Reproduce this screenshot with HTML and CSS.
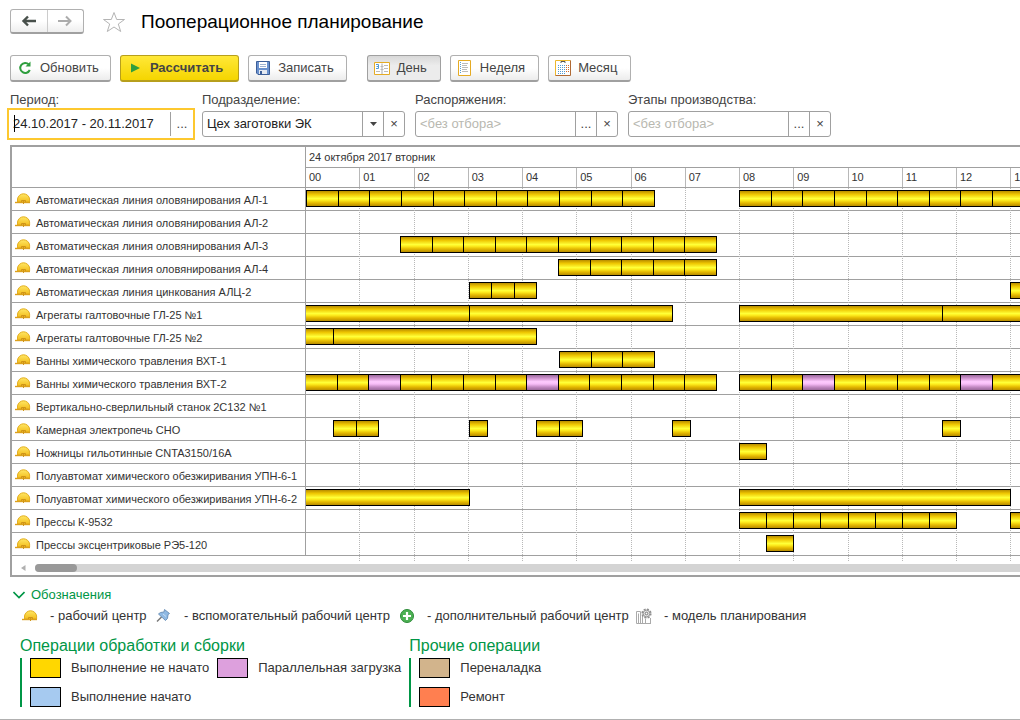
FILE: index.html
```html
<!DOCTYPE html>
<html lang="ru">
<head>
<meta charset="utf-8">
<title>Пооперационное планирование</title>
<link rel="stylesheet" href="styles.css">
</head>
<body>
<svg class="defs" aria-hidden="true">
  <defs>
    <linearGradient id="gold" x1="0" y1="0" x2="0" y2="1"><stop offset="0" stop-color="#ffe765"/><stop offset="1" stop-color="#f3bd1c"/></linearGradient>
    <symbol id="helmet" viewBox="0 0 16 12">
      <path d="M2.500 9V6C3 3 5.500 .8 8.500 .8S14.200 3 14.600 6V9Z" fill="url(#gold)" stroke="#e3ae22"/>
      <path d="M0 9.500H15" stroke="#dca01c" stroke-width="1.400"/>
      <path d="M6.500 9V7.500H10.500V9M8.500 7.500V11" fill="none" stroke="#cf9418"/>
    </symbol>
  </defs>
</svg>

<header class="top">
  <div class="history">
    <button type="button" aria-label="Назад"><svg width="16" height="12" viewBox="0 0 16 12"><path d="M15 6H3M7 1.500L2.500 6L7 10.500" fill="none" stroke="#48504b" stroke-width="2.400"/></svg></button>
    <button type="button" aria-label="Вперед"><svg width="16" height="12" viewBox="0 0 16 12"><path d="M1 6H13M9 1.500L13.500 6L9 10.500" fill="none" stroke="#acacac" stroke-width="2"/></svg></button>
  </div>
  <button type="button" class="star" aria-label="В избранное"><svg width="24" height="22" viewBox="0 0 24 22"><path d="M12 1.500L14.700 8.500H22.500L16.300 13L18.700 20.500L12 16L5.300 20.500L7.700 13L1.500 8.500H9.300Z" fill="#fff" stroke="#b4b4b4"/></svg></button>
  <h1>Пооперационное планирование</h1>
</header>

<div class="toolbar">
  <button type="button" class="btn refresh"><svg width="16" height="16" viewBox="0 0 16 16"><path d="M11.800 4.400A5 5 0 1 0 12.800 10" fill="none" stroke="#2f9e3e" stroke-width="2"/><path d="M8.500 6.500H13.500V1.500Z" fill="#2f9e3e"/></svg>Обновить</button>
  <button type="button" class="btn primary"><svg width="16" height="16" viewBox="0 0 16 16"><path d="M4 3.500L13 8L4 12.500Z" fill="#2f9e3e"/></svg>Рассчитать</button>
  <button type="button" class="btn save"><svg width="16" height="16" viewBox="0 0 16 16"><path d="M1.500 1.500H14.500V14.500H3L1.500 13Z" fill="#6a91ce" stroke="#3c5e98"/><path d="M4 2H12V8H4Z" fill="#fff"/><path d="M5 4.500H11M5 6.500H11" stroke="#9fb3d2"/><path d="M4 10H12V14H4Z" fill="#e4e9f1"/><path d="M5 11H7V14H5Z" fill="#3c5e98"/></svg>Записать</button>
  <div class="scale">
    <button type="button" class="btn pressed" aria-pressed="true"><svg width="16" height="16" viewBox="0 0 16 16"><path d="M.5 2.500H15.500V14.500H.5Z" fill="#fff" stroke="#e5ab24"/><path d="M8 3.500V14" stroke="#aaa"/><path d="M2 4.500H4.500V8.500H2M2.500 6.500H4.500" stroke="#529bd4" fill="none"/><path d="M10 5.500H14M10 8.500H14M10 11.500H14M2 11.500H6M6.500 6.500H9.500M6.500 9.500H9.500" stroke="#bbb"/></svg>День</button>
    <button type="button" class="btn"><svg width="16" height="16" viewBox="0 0 16 16"><path d="M1.500 .5H13.500V15.500H1.500Z" fill="#fff" stroke="#e5ab24"/><path d="M3.500 2V14" stroke="#529bd4" stroke-dasharray="1 1"/><path d="M5 3.500H11M5 5.500H10M5 7.500H11M5 9.500H10M5 11.500H11" stroke="#bbb"/></svg>Неделя</button>
    <button type="button" class="btn"><svg width="16" height="16" viewBox="0 0 16 16"><path d="M.5 .5H15.500V15.500H.5Z" fill="#fff"/><path d="M.5 15.500V.5H15.500" fill="none" stroke="#edb72b"/><path d="M.5 15.500H15.500V.5" fill="none" stroke="#b06a34"/><path d="M6 3V1.500H10V3" fill="none" stroke="#555"/><path d="M3 5.500H11M3 7.500H11M3 9.500H11M3 11.500H11M3 13.500H11" stroke="#529bd4" stroke-dasharray="1 1"/><path d="M11 5.500H14M11 7.500H14M11 9.500H14M11 11.500H14" stroke="#d46a2a" stroke-dasharray="1 1"/></svg>Месяц</button>
  </div>
</div>

<form class="filters">
  <div class="field period"><label for="period">Период:</label>
    <div class="box focused"><span class="caret"></span><input id="period" value="24.10.2017 - 20.11.2017"><button type="button" aria-label="Выбрать период">...</button></div></div>
  <div class="field"><label for="dept">Подразделение:</label>
    <div class="box"><input id="dept" value="Цех заготовки ЭК"><button type="button" aria-label="Раскрыть список"><svg width="7" height="4" viewBox="0 0 7 4"><path d="M0 0H7L3.500 4Z" fill="#444"/></svg></button><button type="button" aria-label="Очистить">×</button></div></div>
  <div class="field"><label for="orders">Распоряжения:</label>
    <div class="box"><input id="orders" placeholder="&lt;без отбора&gt;"><button type="button" aria-label="Выбрать">...</button><button type="button" aria-label="Очистить">×</button></div></div>
  <div class="field"><label for="stages">Этапы производства:</label>
    <div class="box"><input id="stages" placeholder="&lt;без отбора&gt;"><button type="button" aria-label="Выбрать">...</button><button type="button" aria-label="Очистить">×</button></div></div>
</form>

<section class="gantt">
  <div class="lines"><div class="hours-grid"><i></i><i></i><i></i><i></i><i></i><i></i><i></i><i></i><i></i><i></i><i></i><i></i><i></i><i></i><i></i><i></i><i></i><i></i><i></i><i></i><i></i><i></i><i></i><i></i></div></div>
  <table>
    <colgroup><col class="name-col"><col></colgroup>
    <thead>
      <tr><td></td><th scope="col"><div class="date">24 октября 2017 вторник</div>
        <div class="clip"><div class="hours-grid hours"><span>00</span><span>01</span><span>02</span><span>03</span><span>04</span><span>05</span><span>06</span><span>07</span><span>08</span><span>09</span><span>10</span><span>11</span><span>12</span><span>13</span></div></div></th></tr>
    </thead>
    <tbody>
      <tr><th scope="row"><div class="name"><svg><use href="#helmet"/></svg>Автоматическая линия оловянирования АЛ-1</div></th><td><div class="track"><div class="run" style="left:0;width:349px"><b></b><b></b><b></b><b></b><b></b><b></b><b></b><b></b><b></b><b></b><b></b></div><div class="run" style="left:433px;width:349px"><b></b><b></b><b></b><b></b><b></b><b></b><b></b><b></b><b></b><b></b><b></b></div></div></td></tr>
      <tr><th scope="row"><div class="name"><svg><use href="#helmet"/></svg>Автоматическая линия оловянирования АЛ-2</div></th><td><div class="track"></div></td></tr>
      <tr><th scope="row"><div class="name"><svg><use href="#helmet"/></svg>Автоматическая линия оловянирования АЛ-3</div></th><td><div class="track"><div class="run" style="left:94px;width:317px"><b></b><b></b><b></b><b></b><b></b><b></b><b></b><b></b><b></b><b></b></div></div></td></tr>
      <tr><th scope="row"><div class="name"><svg><use href="#helmet"/></svg>Автоматическая линия оловянирования АЛ-4</div></th><td><div class="track"><div class="run" style="left:252px;width:159px"><b></b><b></b><b></b><b></b><b></b></div></div></td></tr>
      <tr><th scope="row"><div class="name"><svg><use href="#helmet"/></svg>Автоматическая линия цинкования АЛЦ-2</div></th><td><div class="track"><div class="run" style="left:163px;width:68px"><b></b><b></b><b></b></div><div class="run" style="left:704px;width:68px"><b></b><b></b><b></b></div></div></td></tr>
      <tr><th scope="row"><div class="name"><svg><use href="#helmet"/></svg>Агрегаты галтовочные ГЛ-25 №1</div></th><td><div class="track"><div class="run" style="left:-41px;width:408px"><b></b><b></b></div><div class="run" style="left:433px;width:407px"><b></b><b></b></div></div></td></tr>
      <tr><th scope="row"><div class="name"><svg><use href="#helmet"/></svg>Агрегаты галтовочные ГЛ-25 №2</div></th><td><div class="track"><div class="run" style="left:-176px;width:407px"><b></b><b></b></div></div></td></tr>
      <tr><th scope="row"><div class="name"><svg><use href="#helmet"/></svg>Ванны химического травления ВХТ-1</div></th><td><div class="track"><div class="run" style="left:253px;width:96px"><b></b><b></b><b></b></div></div></td></tr>
      <tr><th scope="row"><div class="name"><svg><use href="#helmet"/></svg>Ванны химического травления ВХТ-2</div></th><td><div class="track"><div class="run" style="left:-1px;width:412px"><b></b><b></b><b class="parallel"></b><b></b><b></b><b></b><b></b><b class="parallel"></b><b></b><b></b><b></b><b></b><b></b></div><div class="run" style="left:433px;width:412px"><b></b><b></b><b class="parallel"></b><b></b><b></b><b></b><b></b><b class="parallel"></b><b></b><b></b><b></b><b></b><b></b></div></div></td></tr>
      <tr><th scope="row"><div class="name"><svg><use href="#helmet"/></svg>Вертикально-сверлильный станок 2С132 №1</div></th><td><div class="track"></div></td></tr>
      <tr><th scope="row"><div class="name"><svg><use href="#helmet"/></svg>Камерная электропечь СНО</div></th><td><div class="track"><div class="run" style="left:27px;width:46px"><b></b><b></b></div><div class="run" style="left:163px;width:19px"><b></b></div><div class="run" style="left:230px;width:47px"><b></b><b></b></div><div class="run" style="left:366px;width:19px"><b></b></div><div class="run" style="left:636px;width:19px"><b></b></div></div></td></tr>
      <tr><th scope="row"><div class="name"><svg><use href="#helmet"/></svg>Ножницы гильотинные CNTA3150/16А</div></th><td><div class="track"><div class="run" style="left:433px;width:28px"><b></b></div></div></td></tr>
      <tr><th scope="row"><div class="name"><svg><use href="#helmet"/></svg>Полуавтомат химического обезжиривания УПН-6-1</div></th><td><div class="track"></div></td></tr>
      <tr><th scope="row"><div class="name"><svg><use href="#helmet"/></svg>Полуавтомат химического обезжиривания УПН-6-2</div></th><td><div class="track"><div class="run" style="left:-41px;width:205px"><b></b></div><div class="run" style="left:433px;width:272px"><b></b></div></div></td></tr>
      <tr><th scope="row"><div class="name"><svg><use href="#helmet"/></svg>Прессы К-9532</div></th><td><div class="track"><div class="run" style="left:433px;width:218px"><b></b><b></b><b></b><b></b><b></b><b></b><b></b><b></b></div><div class="run" style="left:704px;width:55px"><b></b><b></b></div></div></td></tr>
      <tr><th scope="row"><div class="name"><svg><use href="#helmet"/></svg>Прессы эксцентриковые РЭ5-120</div></th><td><div class="track"><div class="run" style="left:460px;width:28px"><b></b></div></div></td></tr>
    </tbody>
  </table>
  <div class="scroll"><svg width="5" height="6" viewBox="0 0 5 6"><path d="M4.500 0V6L0 3Z" fill="#b0b0b0"/></svg><div class="rail"><div class="thumb"></div></div></div>
</section>

<section class="legend">
  <button type="button" class="toggle" aria-expanded="true"><svg width="12" height="8" viewBox="0 0 12 8"><path d="M.5 1L6 6.500L11.500 1" fill="none" stroke="#009646" stroke-width="1.600"/></svg>Обозначения</button>
  <ul class="kinds">
    <li><svg width="16" height="12"><use href="#helmet"/></svg>- рабочий центр</li>
    <li><svg width="16" height="16" viewBox="0 0 16 16"><path d="M1 13.500L6 8.500" stroke="#777" stroke-width="1.500"/><path d="M8.500 1.500L13.500 5.500L12 6.500L11.500 10.500L9.500 12.500L2.500 6L4.500 4.500L8 4Z" fill="#8fb9e3" stroke="#6f94bb"/><path d="M7 6L10 8.500" stroke="#c7def5"/></svg>- вспомогательный рабочий центр</li>
    <li><svg width="16" height="16" viewBox="0 0 16 16"><circle cx="8" cy="8" r="6.500" fill="#4db154" stroke="#2c8b38"/><path d="M8 4V12M4 8H12" stroke="#fff" stroke-width="2.200"/></svg>- дополнительный рабочий центр</li>
    <li><svg width="16" height="16" viewBox="0 0 16 16"><path d="M.5 15.500V3.500H4.500V15.500M2.500 5.500V15.500M6.500 15.500V8M9.500 11V15.500M14.500 10V15.500M.5 15.500H15" fill="none" stroke="#aaa"/><circle cx="10.500" cy="5.500" r="4.300" fill="#e4e4e4" stroke="#909090" stroke-width="1.600" stroke-dasharray="2 1.370"/><circle cx="10.500" cy="5.500" r="3.300" fill="#e4e4e4" stroke="#999"/><circle cx="10.500" cy="5.500" r="1.300" fill="#fff" stroke="#777"/></svg>- модель планирования</li>
  </ul>
  <div class="groups">
    <div class="group"><h2>Операции обработки и сборки</h2>
      <div class="items two"><div class="item"><i class="swatch todo"></i>Выполнение не начато</div><div class="item"><i class="swatch par"></i>Параллельная загрузка</div><div class="item"><i class="swatch started"></i>Выполнение начато</div></div></div>
    <div class="group"><h2>Прочие операции</h2>
      <div class="items"><div class="item"><i class="swatch setup"></i>Переналадка</div><div class="item"><i class="swatch repair"></i>Ремонт</div></div></div>
  </div>
</section>
</body>
</html>
```
FILE: styles.css
```css
* { box-sizing: border-box; }
body {
  margin: 0;
  min-height: 100vh;
  padding: 9px 0 0 10px;
  border-bottom: 1px solid #b0b0b0;
  background: #fff;
  color: #333;
  font: 13px/16px "Liberation Sans", Arial, sans-serif;
  overflow-x: hidden;
}
button, input { font: inherit; color: inherit; }
button { padding: 0; background: none; border: 0; }
svg { flex: none; display: block; }
.defs { position: absolute; width: 0; height: 0; }

.top { display: flex; align-items: center; height: 25px; }
.history {
  display: flex;
  width: 74px;
  height: 25px;
  border: 1px solid #b0b0b0;
  border-bottom: 2px solid #a0a0a0;
  border-radius: 3px;
  background: linear-gradient(#fff 50%, #eee);
}
.history button { flex: 1; display: flex; align-items: center; justify-content: center; }
.history button + button { border-left: 1px solid #ccc; }
.star { margin-left: 18px; }
h1 { margin: 0 0 0 15px; font-size: 19px; line-height: 24px; font-weight: 400; color: #000; }

.toolbar { display: flex; gap: 9px; margin-top: 21px; }
.scale { display: flex; gap: 9px; margin-left: 11px; }
.btn {
  display: flex;
  align-items: center;
  gap: 7px;
  height: 27px;
  padding: 0 13px 0 6px;
  border: 1px solid #b0b0b0;
  border-bottom: 2px solid #a0a0a0;
  border-radius: 3px;
  background: linear-gradient(#fff 50%, #ececec);
  color: #444;
  white-space: nowrap;
}
.refresh { padding-right: 11px; }
.save { padding-right: 12px; }
.primary {
  padding-right: 15px;
  border-color: #b79f1c;
  background: linear-gradient(#ffe838, #f5d500);
  font-weight: 700;
}
.pressed { border-color: #a0a0a0; background: linear-gradient(#d8d8d8, #ececec 40%); }

.filters { display: flex; gap: 10px; margin-top: 9px; }
.field { width: 203px; }
.period { width: 182px; }
.field label { display: block; line-height: 18px; height: 20px; color: #444; }
.box {
  display: flex;
  position: relative;
  height: 26px;
  border: 1px solid #a0a0a0;
  border-radius: 3px;
  overflow: hidden;
}
.box input {
  flex: 1;
  min-width: 0;
  padding: 0 0 0 4px;
  border: 0;
  outline: 0;
  background: none;
  color: #222;
}
.box input::placeholder { color: #b8b8b0; opacity: 1; }
.box button {
  display: flex;
  align-items: center;
  justify-content: center;
  width: 21px;
  border-left: 1px solid #a0a0a0;
  color: #444;
}
.focused {
  height: 32px;
  margin: -3px;
  border: 2px solid #fdc82f;
  border-radius: 0;
}
.focused button { width: 23px; margin: 2px 0; }
.caret { position: absolute; left: 5px; top: 5px; width: 1px; height: 17px; background: #000; }

.gantt {
  position: relative;
  margin-top: 8px;
  border: 2px solid #a0a0a0;
  border-right: 0;
  font-size: 11px;
  line-height: 14px;
}
.gantt table { width: 100%; border-collapse: separate; border-spacing: 0; table-layout: fixed; }
.name-col { width: 294px; }
.gantt th, .gantt td { padding: 0; font-weight: 400; text-align: left; border-bottom: 1px solid #a0a0a0; }
.gantt tr > :first-child { border-right: 1px solid #a0a0a0; }
.date { height: 21px; padding: 3px; border-bottom: 1px solid #a0a0a0; }
.clip { overflow: hidden; }
.hours-grid { display: grid; grid-template-columns: repeat(24, 1fr); width: 1302px; }
.hours span { height: 19px; padding: 2px 3px; border-right: 1px solid #b8b8b8; }
.lines { position: absolute; left: 294px; right: 0; top: 41px; bottom: 14px; overflow: hidden; }
.lines .hours-grid { height: 100%; }
.lines i { border-right: 1px dotted #b8b8b8; }
.name { display: flex; gap: 5px; height: 22px; padding: 5px 0 0 3px; white-space: nowrap; }
.name svg { width: 16px; height: 12px; }
.track { position: relative; height: 22px; overflow: hidden; }
.run {
  position: absolute;
  top: 2px;
  height: 17px;
  display: flex;
  border: solid #000;
  border-width: 1px 1px 1px 0;
}
.run b {
  flex: 1;
  border-left: 1px solid #000;
  background: linear-gradient(#b88d00, #eec500 22%, #ffff38 50%, #fff020 60%, #e4b800 80%, #b88d00);
}
.run .parallel { background: linear-gradient(#9b689b, #d79bd7 25%, #ffccff 45%, #f7bcf7 60%, #c48ac4 80%, #9b689b); }
.scroll { display: flex; align-items: center; gap: 9px; height: 19px; padding: 5px 0 0 9px; }
.rail { flex: 1; height: 8px; background: #d4d4d4; border-radius: 4px 0 0 4px; }
.thumb { width: 42px; height: 8px; border-radius: 4px; background: #999; }

.legend { padding: 10px 0 10px 0; }
.toggle { display: flex; align-items: center; gap: 6px; padding-left: 3px; color: #009646; }
.kinds { display: grid; grid-template-columns: 134px 243px 237px auto; margin: 5px 0 0; padding: 0 0 0 12px; list-style: none; }
.kinds li { display: flex; align-items: center; gap: 12px; white-space: nowrap; }
.groups { display: flex; gap: 8px; margin: 12px 0 0 10px; }
h2 { margin: 0 0 2px; font-size: 16px; line-height: 20px; font-weight: 400; color: #009646; }
.items { display: grid; gap: 9px 8px; padding-left: 8px; border-left: 2px solid #009646; }
.two { grid-template-columns: auto auto; }
.item { display: flex; align-items: center; gap: 10px; height: 20px; white-space: nowrap; }
.swatch { width: 31px; height: 20px; border: 1px solid #000; }
.todo { background: #ffd700; }
.par { background: #dda0dd; }
.started { background: #a6caf0; }
.setup { background: #d2b48c; }
.repair { background: #ff7f50; }
```
